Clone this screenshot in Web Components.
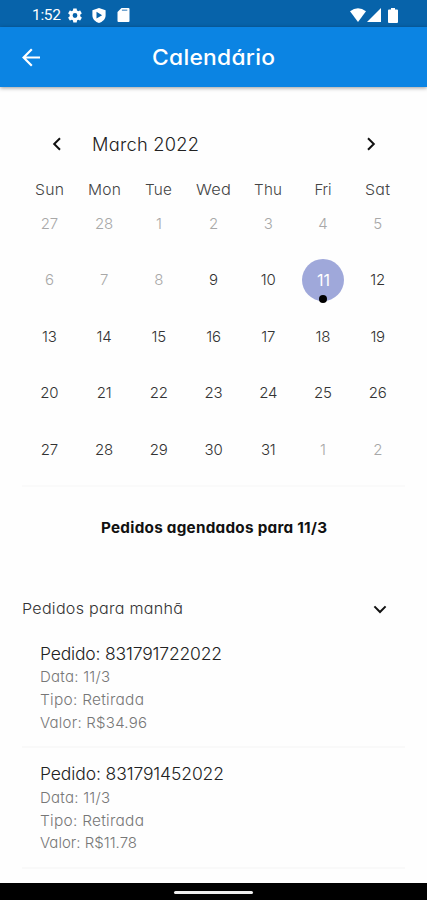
<!DOCTYPE html>
<html lang="pt-BR">
<head>
<meta charset="utf-8">
<title>Calendário</title>
<style>
html,body{margin:0;height:100%;background:#fefefe}
body{font-family:Inter,"Open Sans",sans-serif;font-feature-settings:"cv11","calt" 0;overflow:hidden;color:#333}
</style>
</head>
<body>
<calendar-screen></calendar-screen>
<script>
const define=(name,html,after)=>{
  const t=document.createElement('template');t.innerHTML=html;
  customElements.define(name,class extends HTMLElement{
    connectedCallback(){
      if(this.shadowRoot)return;
      this.attachShadow({mode:'open'}).append(t.content.cloneNode(true));
      if(after)after(this,this.shadowRoot);
    }
  });
};

/* Label whose glyphs are widened so that its text fills the width given in "w". */
define('fit-label',`<style>:host{display:inline-block;white-space:pre;line-height:1}span{display:inline-block;transform-origin:0 50%}</style><span></span>`,(el,root)=>{
  const s=root.querySelector('span');
  s.textContent=el.getAttribute('text');
  const w=+el.getAttribute('w'),n=s.textContent.length;
  if(w&&n>1){
    const own=s.getBoundingClientRect().width;
    const gap=Math.min((w-own)/(n-1),.25);
    s.style.letterSpacing=gap+'px';
    s.style.marginRight=-gap+'px';
    s.style.transform=`scaleX(${w/(own+gap*(n-1))})`;
    el.style.width=w+'px';
  }
});

define('status-bar',`<style>
:host{display:flex;height:27px;background:#0763aa;color:#fff;align-items:center;box-sizing:border-box;padding:3px 29px 0 32px;font:400 15.500px/1 Roboto,sans-serif}
fit-label{padding-top:2px}
svg{display:block;fill:#fff}.g{margin-left:7px}.s{margin-left:10px}.c{margin-left:11px}.w{margin-left:auto}.n{margin-left:1px}.b{margin-left:7px}
</style>
<fit-label text="1:52" w="29"></fit-label>
<svg class="g" width="14" height="15" viewBox="2 2 20 20"><path d="M19.4 13c.1-.6.1-1.400 0-2l2.100-1.700c.2-.1.2-.4.1-.6l-2-3.500c-.1-.2-.4-.3-.6-.2l-2.500 1c-.5-.4-1.100-.7-1.700-1L14.400 2.400c0-.2-.2-.4-.5-.4h-4c-.2 0-.4.2-.5.4L9.100 5c-.6.3-1.200.6-1.700 1l-2.500-1c-.2-.1-.5 0-.6.2l-2 3.500c-.1.2-.1.5.1.6L4.500 11c-.1.6-.1 1.400 0 2l-2.100 1.700c-.2.1-.2.4-.1.6l2 3.500c.1.2.4.3.6.2l2.500-1c.5.4 1.100.7 1.700 1l.4 2.600c0 .2.2.4.5.4h4c.2 0 .4-.2.5-.4l.4-2.600c.6-.3 1.200-.6 1.700-1l2.500 1c.2.1.5 0 .6-.2l2-3.500c.1-.2.1-.5-.1-.6zM12 15.400a3.400 3.400 0 1 1 0-6.800 3.400 3.400 0 0 1 0 6.800z"/></svg>
<svg class="s" width="14" height="15" viewBox="0 0 14 15"><path fill-rule="evenodd" d="M7 0 13.600 2.200V7.500C13.600 11 10.500 14 7 15 3.500 14 .4 11 .4 7.500V2.200zM4.500 3.800v6.700l5.600-3.300z"/></svg>
<svg class="c" width="13" height="14" viewBox="0 0 13 14"><path fill-rule="evenodd" d="M4.500 0H11.500Q12.500 0 12.500 1V13Q12.500 14 11.500 14H1.500Q.5 14 .5 13V4z"/><path d="M4.900 2.200H10.300" stroke="#5d97c8" stroke-width="1.300"/></svg>
<svg class="w" width="16" height="14" viewBox="0 0 16 14"><path d="M0 3.300Q8-2.800 16 3.300L8 14z"/></svg>
<svg class="n" width="14" height="14" viewBox="0 0 14 14"><path d="M14 0V14H0z"/></svg>
<svg class="b" width="10" height="15" viewBox="0 0 10 15"><path d="M3 0H7V1.500H9Q10 1.500 10 2.500V14Q10 15 9 15H1Q0 15 0 14V2.500Q0 1.500 1 1.500H3z"/></svg>`);

define('app-bar',`<style>
:host{display:grid;grid-template-columns:1fr auto 1fr;align-items:center;height:60px;background:#0b84e3;color:#fff;box-shadow:0 1px 4px #0006;font-size:21px;font-weight:500;position:relative}
svg{margin-left:22px;display:block}
</style>
<svg width="19" height="19" viewBox="0 0 19 19" fill="none" stroke="#fff" stroke-width="2.200"><path d="M18 9.500H2M9.800 1.300 1.600 9.500 9.800 17.700"/></svg>
<fit-label text="Calendário" w="123"></fit-label><span></span>`);

define('month-header',`<style>
:host{display:flex;align-items:center;height:24px;padding:0 29px 0 30px;color:#222;font-size:18px;font-weight:300}
svg{display:block}fit-label{margin-left:30px;padding-top:1px}.r{margin-left:auto}
</style>
<svg width="10" height="14" viewBox="0 0 10 14" fill="none" stroke="#111" stroke-width="2"><path d="M8 1.200 2.200 7 8 12.800"/></svg>
<fit-label text="March 2022" w="107"></fit-label>
<svg class="r" width="10" height="14" viewBox="0 0 10 14" fill="none" stroke="#111" stroke-width="2"><path d="M2 1.200 7.800 7 2 12.800"/></svg>`);

define('day-cell',`<style>
:host{display:grid;place-items:center;height:56.500px;color:#333;font-size:15px;font-weight:300;letter-spacing:-.2px}
:host([muted]){color:#a8a8a8}
div{display:grid;place-items:center;width:42px;height:42px;border-radius:50%;position:relative}
:host([selected]) div{background:#9fa8da;color:#fff;font-size:16px;font-weight:400;margin:1px 0 0 1px}
:host([selected]) div::after{content:"";position:absolute;width:8px;height:8px;border-radius:50%;background:#000;left:17px;bottom:-2px}
</style><div><slot></slot></div>`);

define('month-grid',`<style>
:host{display:block}
div{display:grid;grid-template-columns:repeat(7,1fr)}
.h{height:20px;align-items:center;justify-items:center;color:#444;font-size:15px;font-weight:300;margin-bottom:-4px}
</style><div class="h"></div><div class="d"></div>`,(el,root)=>{
  const w=[29,33,27,35,28,17,25];
  root.querySelector('.h').innerHTML=['Sun','Mon','Tue','Wed','Thu','Fri','Sat'].map((d,i)=>`<fit-label text="${d}" w="${w[i]}"></fit-label>`).join('');
  const days=[27,28];
  for(let i=1;i<32;i++)days.push(i);
  days.push(1,2);
  root.querySelector('.d').innerHTML=days.map((d,i)=>`<day-cell${i<10||i>32?' muted':''}${i===12?' selected':''}>${d}</day-cell>`).join('');
});

define('section-header',`<style>
:host{display:flex;justify-content:space-between;align-items:center;height:24px;padding-right:18px;font-size:15px;font-weight:300;color:#333}
</style><fit-label text="Pedidos para manhã" w="161"></fit-label>
<svg width="14" height="10" viewBox="0 0 14 10" fill="none" stroke="#111" stroke-width="2"><path d="M1.400 2.400 7 8 12.600 2.400"/></svg>`);

define('order-item',`<style>
:host{display:flex;flex-direction:column;box-sizing:border-box;height:120.500px;padding:14px 18px 0;border-bottom:2px solid #f9f9f9;color:#777;font-size:15px;font-weight:300}
div{height:22.800px;display:flex;align-items:center}
.t{height:24px;color:#222;font-size:17.500px}
</style>`,(el,root)=>{
  const [id,value,wi,wv]=['number','value','wn','wv'].map(k=>el.getAttribute(k));
  root.innerHTML+=`<div class="t"><fit-label text="Pedido: ${id}" w="${wi}"></fit-label></div>
<div><fit-label text="Data: 11/3" w="70"></fit-label></div>
<div><fit-label text="Tipo: Retirada" w="104"></fit-label></div>
<div><fit-label text="Valor: ${value}" w="${wv}"></fit-label></div>`;
});

define('nav-bar',`<style>
:host{display:flex;justify-content:center;box-sizing:border-box;height:17px;padding-top:8px;background:#000}
i{width:79px;height:3px;border-radius:2px;background:#eee}
</style><i></i>`);

define('calendar-screen',`<style>
:host{display:flex;flex-direction:column;width:427px;height:900px}
main{flex:1;padding:45px 22px 0;overflow:hidden}
month-grid{margin-top:23px}
hr{border:0;height:2px;background:#fafafa;margin:7px 0 0}
.s{display:flex;justify-content:center;height:20px;align-items:center;margin-top:31px;color:#111;font-size:15px;font-weight:700}
section-header{margin-top:59px}
order-item:first-of-type{margin-top:7px}
</style>
<status-bar></status-bar><app-bar></app-bar>
<main><month-header></month-header><month-grid></month-grid><hr>
<div class="s"><fit-label text="Pedidos agendados para 11/3" w="226"></fit-label></div>
<section-header></section-header>
<order-item number="831791722022" value="R$34.96" wn="182" wv="107"></order-item>
<order-item number="831791452022" value="R$11.78" wn="184" wv="97"></order-item>
</main><nav-bar></nav-bar>`);
</script>
</body>
</html>
